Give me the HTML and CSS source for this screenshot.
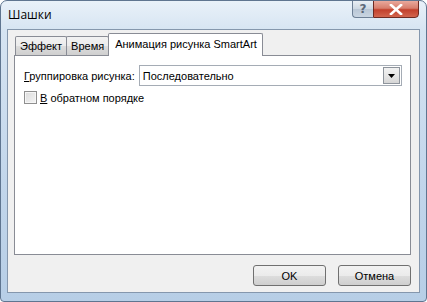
FILE: index.html
```html
<!DOCTYPE html>
<html lang="ru">
<head>
    <meta charset="UTF-8">
    <title>Шашки</title>
    <link rel="stylesheet" href="styles.css">
</head>
<body>

<div class="window">
    <div class="titlebar">
        <span class="title">Шашки</span>
        <div class="caption-buttons">
            <div class="cap-btn help">?</div>
            <div class="cap-btn close">
                <svg width="14" height="11" viewBox="0 0 14 11">
                    <path d="M2 1 L12 10 M12 1 L2 10" stroke="#fff" stroke-width="2.6" stroke-linecap="square"/>
                </svg>
            </div>
        </div>
    </div>

    <div class="client">
        <div class="tabs">
            <div class="tab">Эффект</div>
            <div class="tab">Время</div>
            <div class="tab active">Анимация рисунка SmartArt</div>
        </div>

        <div class="panel">
            <div class="form-row">
                <label class="field-label"><u>Г</u>руппировка рисунка:</label>
                <div class="select">
                    <span class="select-value">Последовательно</span>
                    <div class="select-btn">
                        <svg width="7" height="4" viewBox="0 0 7 4"><path d="M0 0 H7 L3.5 4 Z" fill="#000"/></svg>
                    </div>
                </div>
            </div>
            <div class="check-row">
                <span class="checkbox"></span>
                <label><u>В</u> обратном порядке</label>
            </div>
        </div>

        <div class="buttons">
            <button class="btn">OK</button>
            <button class="btn">Отмена</button>
        </div>
    </div>
</div>

</body>
</html>
```

FILE: styles.css
```css
body {
    margin: 0;
    padding: 0;
    background-color: #fff;
    font-family: "Liberation Sans", Arial, sans-serif;
    font-size: 11px;
    color: #000;
}

.window {
    width: 427px;
    height: 302px;
    box-sizing: border-box;
    border: 1px solid #5f7590;
    border-radius: 7px 7px 4px 4px;
    background: linear-gradient(to bottom, #e9f1f9 0px, #d6e4f2 30px, #c2d6eb 60%, #b7cee6 100%);
    display: flex;
    flex-direction: column;
    overflow: hidden;
}

.titlebar {
    height: 28px;
    display: flex;
    justify-content: space-between;
    align-items: flex-start;
    padding-left: 7px;
}

.title {
    font-family: "Open Sans", "Noto Sans", sans-serif;
    font-size: 12px;
    line-height: 28px;
}

.caption-buttons {
    display: flex;
    margin-right: 7px;
    margin-top: -1px;
}

.cap-btn {
    height: 18px;
    box-sizing: border-box;
    border: 1px solid #6d7f95;
    display: flex;
    align-items: center;
    justify-content: center;
}

.help {
    width: 21px;
    border-right: none;
    border-radius: 0 0 0 4px;
    background: linear-gradient(to bottom, #e9eef4 0%, #cdd7e2 50%, #b9c6d5 51%, #c9d5e2 100%);
    color: #5c6878;
    font-family: "DejaVu Sans", sans-serif;
    font-size: 12px;
    font-weight: bold;
}

.close {
    width: 46px;
    border-color: #6e2a22;
    border-radius: 0 0 4px 0;
    background: linear-gradient(to bottom, #e9a99c 0%, #d77e6d 45%, #c2402c 55%, #d2654e 100%);
}

.client {
    flex: 1;
    margin: 0 6px 8px 6px;
    border: 1px solid #8597ad;
    background-color: #f0f0f0;
    display: flex;
    flex-direction: column;
    padding: 3px 8px 0 6px;
}

.tabs {
    display: flex;
    align-items: flex-end;
    padding-left: 1px;
    height: 22px;
    position: relative;
    z-index: 1;
}

.tab {
    height: 19px;
    box-sizing: border-box;
    border: 1px solid #898c95;
    border-bottom: none;
    border-radius: 2px 2px 0 0;
    background: linear-gradient(to bottom, #f2f2f2 0%, #ebebeb 50%, #dddddd 51%, #cfcfcf 100%);
    padding: 0 4px;
    line-height: 19px;
    margin-right: -1px;
}

.tab.active {
    height: 23px;
    margin-bottom: -1px;
    background: #fff;
    padding: 0 5px 0 6px;
    line-height: 20px;
}

.panel {
    height: 200px;
    box-sizing: border-box;
    border: 1px solid #898c95;
    background-color: #fff;
    padding: 9px 8px 0 9px;
}

.form-row {
    display: flex;
    align-items: center;
    gap: 4px;
}

.select {
    flex: 1;
    height: 21px;
    box-sizing: border-box;
    border: 1px solid #a5acb5;
    display: flex;
    align-items: center;
    justify-content: space-between;
    padding: 1px 1px 1px 3px;
}

.select-btn {
    width: 17px;
    height: 17px;
    box-sizing: border-box;
    border: 1px solid #8e949c;
    background: linear-gradient(to bottom, #f2f2f2 0%, #e6e6e6 50%, #d6d6d6 100%);
    display: flex;
    align-items: center;
    justify-content: center;
}

.check-row {
    display: flex;
    align-items: center;
    gap: 3px;
    margin-top: 5px;
}

.checkbox {
    width: 13px;
    height: 13px;
    box-sizing: border-box;
    border: 1px solid #8f8f8f;
    background: linear-gradient(135deg, #dcdcdc 0%, #f4f4f4 100%);
    box-shadow: inset 0 0 0 1px #f6f6f6;
}

.buttons {
    display: flex;
    justify-content: flex-end;
    gap: 12px;
    margin-top: 10px;
}

.btn {
    width: 73px;
    height: 21px;
    border: 1px solid #707070;
    border-radius: 3px;
    background: linear-gradient(to bottom, #f2f2f2 0%, #ebebeb 50%, #dddddd 51%, #cfcfcf 100%);
    font-family: "Liberation Sans", Arial, sans-serif;
    font-size: 11px;
    color: #000;
    padding: 0;
}
```
